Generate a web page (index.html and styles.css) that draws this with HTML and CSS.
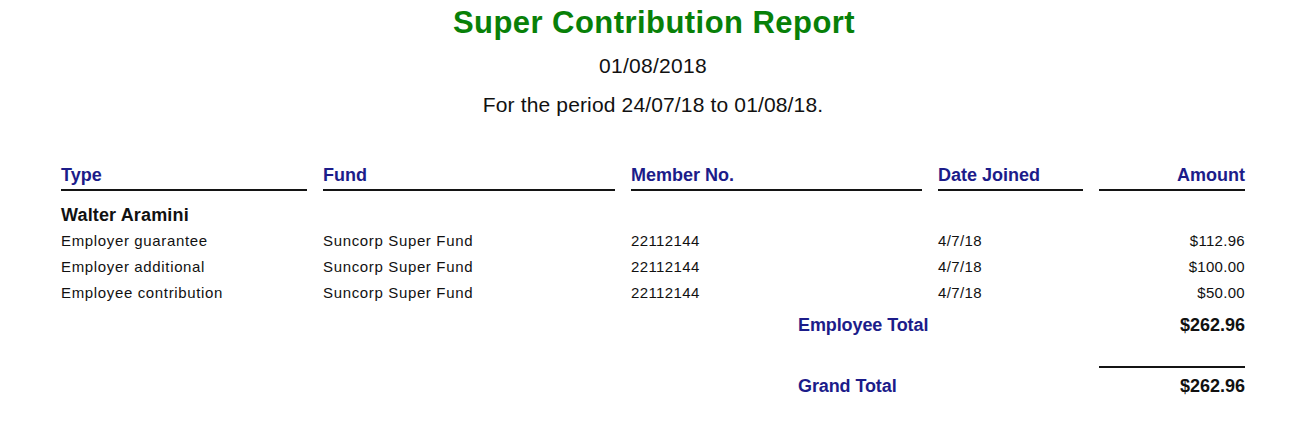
FILE: index.html
```html
<!DOCTYPE html>
<html>
<head>
<meta charset="utf-8">
<link rel="stylesheet" href="styles.css">
</head>
<body>
<div class="report">
  <header class="report-head">
    <h1 class="title">Super Contribution Report</h1>
    <div class="date">01/08/2018</div>
    <div class="period">For the period 24/07/18 to 01/08/18.</div>
  </header>
  <div class="grid">
    <div class="th">Type</div>
    <div class="th">Fund</div>
    <div class="th">Member No.</div>
    <div class="th">Date Joined</div>
    <div class="th right">Amount</div>

    <div class="name">Walter Aramini</div>

    <div class="td txt">Employer guarantee</div>
    <div class="td txt">Suncorp Super Fund</div>
    <div class="td">22112144</div>
    <div class="td">4/7/18</div>
    <div class="td right">$112.96</div>

    <div class="td txt">Employer additional</div>
    <div class="td txt">Suncorp Super Fund</div>
    <div class="td">22112144</div>
    <div class="td">4/7/18</div>
    <div class="td right">$100.00</div>

    <div class="td txt">Employee contribution</div>
    <div class="td txt">Suncorp Super Fund</div>
    <div class="td">22112144</div>
    <div class="td">4/7/18</div>
    <div class="td right">$50.00</div>

    <div class="total-label emp">Employee Total</div>
    <div class="total-value emp">$262.96</div>

    <div class="grand-line"></div>

    <div class="total-label grand">Grand Total</div>
    <div class="total-value grand">$262.96</div>
  </div>
</div>
</body>
</html>
```
FILE: styles.css
```css
* { box-sizing: border-box; }
html, body { margin: 0; padding: 0; background: #ffffff; }
body {
  font-family: "Liberation Sans", Arial, sans-serif;
  color: #111111;
  width: 1314px;
}
.report { padding-top: 5px; }
.report-head { text-align: center; }
.title {
  margin: 0;
  font-size: 31px;
  line-height: 36px;
  font-weight: bold;
  color: #088008;
  letter-spacing: 0.45px;
  padding-right: 6px;
}
.date {
  margin-top: 13px;
  font-size: 21px;
  line-height: 24px;
  letter-spacing: 0.3px;
  padding-right: 8px;
}
.period {
  margin-top: 15px;
  font-size: 21px;
  line-height: 24px;
  letter-spacing: 0.15px;
  padding-right: 8px;
}
.grid {
  margin: 48px 0 0 61px;
  width: 1184px;
  display: grid;
  grid-template-columns: 246px 292px 291px 145px 146px;
  column-gap: 16px;
}
.th {
  font-size: 18px;
  font-weight: bold;
  color: #1c1c8a;
  line-height: 20px;
  padding-bottom: 4px;
  border-bottom: 2px solid #141414;
}
.right { text-align: right; }
.name {
  grid-column: 1 / -1;
  font-size: 18px;
  font-weight: bold;
  line-height: 26px;
  margin-top: 11px;
  letter-spacing: 0.15px;
}
.td {
  font-size: 15px;
  line-height: 26px;
  letter-spacing: 0.4px;
}
.td.txt { letter-spacing: 0.65px; }
.td.right { letter-spacing: 0.3px; }
.total-label {
  grid-column: 3 / 5;
  padding-left: 167px;
  font-size: 18px;
  font-weight: bold;
  color: #1c1c8a;
  line-height: 20px;
  letter-spacing: -0.1px;
}
.total-value {
  grid-column: 5;
  text-align: right;
  font-size: 18px;
  font-weight: bold;
  line-height: 20px;
}
.emp { margin-top: 9px; }
.grand-line {
  grid-column: 5;
  height: 2px;
  background: #141414;
  margin-top: 31px;
}
.grand { margin-top: 8px; }
```
